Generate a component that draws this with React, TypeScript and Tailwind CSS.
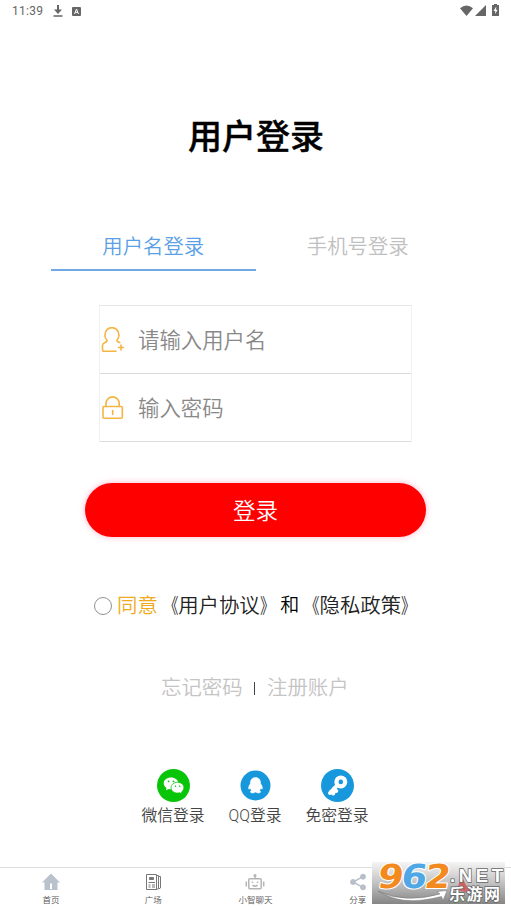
import type { ReactNode } from 'react';

const StatusBar = () => (
  <div className="flex h-[22px] items-center justify-between pl-3 pr-3 text-[#666]">
    <div className="flex items-center">
      <span className="w-[41px] text-[12px] font-normal leading-4 tracking-[0.3px]">11:39</span>
      <svg className="h-3 w-2.5" viewBox="0 0 10 12" fill="currentColor">
        <path d="M4 0h2v4.500h3L5 9 1 4.500h3zM0.500 10.300h9v1.500h-9z" />
      </svg>
      <svg className="ml-[9px] h-[9px] w-[9px]" viewBox="0 0 9 9">
        <rect width="9" height="9" rx="1" fill="currentColor" />
        <path d="M2.500 7 4.500 2l2 5M3.200 5.300h2.600" fill="none" stroke="#fff" strokeWidth="1" />
      </svg>
    </div>
    <div className="mb-0.5 flex items-center">
      <svg className="h-[11px] w-[13px]" viewBox="0 0 13 11" fill="currentColor">
        <path d="M0 3.200Q6.500-2.200 13 3.200L6.500 11z" />
      </svg>
      <svg className="ml-[2px] h-[11px] w-[11px]" viewBox="0 0 11 11" fill="currentColor">
        <path d="M11 0v11H0z" />
      </svg>
      <svg className="ml-[6px] h-3 w-[7px]" viewBox="0 0 7 12">
        <path d="M2 0h3v1h2v11H0V1h2z" fill="currentColor" />
        <path d="M4.300 2.500 1.500 7h1.700v3l2.400-4.300H4z" fill="#fff" />
      </svg>
    </div>
  </div>
);

const UserIcon = () => (
  <svg
    className="h-[26px] w-6"
    viewBox="0 0 24 26"
    fill="none"
    stroke="#f3b544"
    strokeWidth="1.600"
    strokeLinecap="round"
    strokeLinejoin="round"
  >
    <path d="M15 24.300H3Q1.500 24.300 1.500 22.500V18.500Q1.500 16.500 3.500 15.700L5.700 14.500Q6.400 14 5.700 13A7 7 0 0 1 4 7.500a6.900 6.900 0 0 1 13.800 0 7 7 0 0 1-1.700 5.500Q15.500 14 16.500 14.500l2.300 1" />
    <path d="M20 18v5M17.500 20.500h5" />
  </svg>
);

const LockIcon = () => (
  <svg
    className="h-[26px] w-6"
    viewBox="0 0 24 26"
    fill="none"
    stroke="#f3b544"
    strokeWidth="1.600"
    strokeLinecap="round"
    strokeLinejoin="round"
  >
    <rect x="2" y="11.500" width="19.300" height="11.700" rx="1" />
    <path d="M5 11.500V8.500a6.600 6.600 0 0 1 13.200 0v3M11.700 15.500v4" />
  </svg>
);

const Field = ({ icon, label }: { icon: ReactNode; label: string }) => (
  <div className="flex h-[68px] items-center border-b border-[#dcdcdc] pl-px">
    {icon}
    <span className="ml-[13px] pt-[2px] text-[21.400px] leading-8 text-[#888]">{label}</span>
  </div>
);

const DocLink = ({ name }: { name: string }) => (
  <span>
    <span className="inline-block origin-right scale-x-[0.72]">《</span>
    {name}
    <span className="inline-block origin-left scale-x-[0.72]">》</span>
  </span>
);

const WechatIcon = () => (
  <svg className="h-[33px] w-[33px]" viewBox="0 0 33 33">
    <circle cx="16.500" cy="16.500" r="16.500" fill="#09c509" />
    <path d="M14 8.500c-4.200 0-7.300 2.600-7.300 5.800 0 1.900 1.100 3.500 2.800 4.600L8.900 21.300l2.800-1.400c.8.200 1.500.3 2.300.3 4.200 0 7.300-2.600 7.300-5.900S18.200 8.500 14 8.500z" fill="#fff" />
    <path d="M20.500 13.300c-3.700 0-6.400 2.400-6.400 5.400s2.700 5.400 6.400 5.400c.7 0 1.400-.1 2.100-.3l2.400 1.300-.6-2.100c1.500-1 2.500-2.600 2.500-4.300 0-3-2.700-5.400-6.400-5.400z" fill="#fff" stroke="#09c509" strokeWidth="0.800" />
    <g fill="#09c509">
      <circle cx="11.600" cy="12.300" r="0.900" />
      <circle cx="16.500" cy="12.300" r="0.900" />
      <circle cx="18.500" cy="17.200" r="0.800" />
      <circle cx="22.800" cy="17.200" r="0.800" />
    </g>
  </svg>
);

const QQIcon = () => (
  <svg className="h-[33px] w-[33px]" viewBox="0 0 33 33">
    <circle cx="16.500" cy="16.500" r="15" fill="#1798dd" />
    <path d="M16.500 8.500c-3.500 0-5.300 2.600-5.100 6-.8 1.500-2 3.200-1.800 5.200.1.800.9.500 1.600-.6.200 1 .7 1.700 1.300 2.300-1.600.7-1.500 2.600.7 2.600 1.300 0 2.400-.3 3.300-.9.900.6 2 .9 3.300.9 2.200 0 2.300-1.900.7-2.600.6-.6 1.100-1.300 1.300-2.300.7 1.100 1.500 1.400 1.600.6.200-2-1-3.700-1.800-5.200.2-3.400-1.600-6-5.100-6z" fill="#fff" stroke="#fff" strokeWidth="0.500" />
  </svg>
);

const KeyIcon = () => (
  <svg className="h-[33px] w-[33px]" viewBox="0 0 33 33">
    <circle cx="16.500" cy="16.500" r="16.500" fill="#1798dd" />
    <circle cx="19.800" cy="12.900" r="4.400" fill="none" stroke="#fff" strokeWidth="4.200" />
    <path d="m16 16.500-7 7.500M10 22.500l2.300 2M12.800 19.700l2.500 2.300" stroke="#fff" strokeWidth="4" strokeLinecap="round" />
  </svg>
);

const socials = [
  { label: '微信登录', icon: <WechatIcon /> },
  { label: 'QQ登录', icon: <QQIcon /> },
  { label: '免密登录', icon: <KeyIcon /> },
];

const HomeIcon = () => (
  <svg className="h-[18px] w-5" viewBox="0 0 20 18">
    <path d="M10 .5 19 9.500h-2.500V17h-13V9.500H1z" fill="#b9c1cc" />
    <path d="M9 10.500h2V16H9z" fill="#fff" />
  </svg>
);

const NewsIcon = () => (
  <svg className="h-[18px] w-5" viewBox="0 0 20 18" fill="none" stroke="#777">
    <path d="M3.500 1.500h10v15h-10zM13.500 2.500h2v13l-2 1M15.500 3.500h2v11.500l-2 1" />
    <path d="M5.500 12h2M9 12h3M5.500 14h2M9 14h3M5.500 9.500h6.500" />
    <path d="M6.500 4.500h4v2h-4z" fill="#777" />
  </svg>
);

const RobotIcon = () => (
  <svg className="h-[18px] w-5" viewBox="0 0 20 18" fill="none" stroke="#b5b5b5" strokeWidth="1.500">
    <rect x="3.800" y="5.800" width="12.400" height="10" rx="1" />
    <path d="M10 5V2M1.300 8.500v5M18.700 8.500v5M7.500 12.200q2.500 2 5 0" />
    <path d="M6.700 9.300h1.500M11.800 9.300h1.500" />
    <circle cx="10" cy="2.500" r="0.800" fill="#b5b5b5" />
  </svg>
);

const ShareIcon = () => (
  <svg className="h-[18px] w-5" viewBox="0 0 20 18" fill="#b9bfca" stroke="#b9bfca">
    <path d="M15 3.700 5 9l10 5.300" fill="none" strokeWidth="1.500" />
    <circle cx="15" cy="3.700" r="2.500" />
    <circle cx="5" cy="9" r="2.500" />
    <circle cx="15" cy="14.300" r="2.500" />
  </svg>
);

const tabs = [
  { label: '首页', icon: <HomeIcon /> },
  { label: '广场', icon: <NewsIcon /> },
  { label: '小智聊天', icon: <RobotIcon /> },
  { label: '分享', icon: <ShareIcon /> },
];

const SiteBadge = () => (
  <svg className="absolute bottom-[6px] right-[6px] h-[42px] w-[133px] overflow-visible" viewBox="0 0 133 42">
    <defs>
      <linearGradient id="badge" x1="0" y1="0" x2="0" y2="1">
        <stop offset="0" stopColor="#f5f5f5" />
        <stop offset="0.500" stopColor="#c2c2c2" />
        <stop offset="1" stopColor="#858585" />
      </linearGradient>
      <linearGradient id="swoosh" x1="0" y1="0" x2="1" y2="0">
        <stop offset="0" stopColor="#888" />
        <stop offset="0.300" stopColor="#fff" />
        <stop offset="1" stopColor="#fff" />
      </linearGradient>
    </defs>
    <rect width="133" height="42" fill="url(#badge)" />
    <path d="M89 13l6 12h-9zM85 28l9-5 7 9z" fill="#cf6262" />
    <path d="M82 41q10-6 20-2" stroke="#6f9d67" strokeWidth="2" fill="none" />
    <path d="M6 29q27 13 62 3l-3-2.500 10-1-4 10-1.500-4Q29 45 6 29z" fill="url(#swoosh)" stroke="#777" strokeWidth="0.500" />
    <g
      fontFamily="DejaVu Sans, sans-serif"
      fontWeight="700"
      fontSize="33"
      strokeWidth="2"
      stroke="#fff"
      paintOrder="stroke"
      strokeLinejoin="round"
      transform="translate(4.500 26) skewX(-8) scale(1.120 1)"
    >
      <text x="0" y="0" fill="#f28a20">9</text>
      <text x="21" y="0" fill="#50a7e5">6</text>
      <text x="42" y="0" fill="#f28a20">2</text>
    </g>
    <g fill="#fff" stroke="#666" strokeWidth="1.500" paintOrder="stroke" fontWeight="700">
      <text x="78" y="19.500" fontSize="18.500" fontFamily="Liberation Sans, sans-serif" textLength="53">.NET</text>
      <text x="77" y="38" fontSize="16" fontFamily="Noto Sans CJK SC, sans-serif" textLength="51">乐游网</text>
    </g>
  </svg>
);

export default function App() {
  return (
    <div className="relative flex h-[910px] w-[511px] flex-col overflow-hidden bg-white font-['Roboto','Noto_Sans_CJK_SC',sans-serif] font-[350]">
      <StatusBar />

      <h1 className="mt-[90px] pl-px text-center text-[34px] font-medium leading-[50px] text-black [-webkit-text-stroke:0.400px_black]">
        用户登录
      </h1>

      <div className="mx-[51px] mt-[60px] flex h-[49px] text-center text-[20.400px] leading-[51px]">
        <div className="flex-1 border-b-2 border-[#70a9e5] text-[#5b9fe6]">用户名登录</div>
        <div className="flex-1 text-[#c0c0c0]">手机号登录</div>
      </div>

      <div className="ml-[99px] mt-[34px] w-[313px] border-x border-t border-x-[#f0f0f0] border-t-[#e6e6e6]">
        <Field icon={<UserIcon />} label="请输入用户名" />
        <Field icon={<LockIcon />} label="输入密码" />
      </div>

      <button className="ml-[85px] mt-[41px] h-[54px] w-[341px] rounded-full bg-[#ff0000] text-[22.500px] leading-[56px] text-white shadow-[0_0_6px_rgba(255,0,80,0.3)]">
        登录
      </button>

      <div className="ml-[94px] mt-[54px] flex h-[30px] items-center whitespace-nowrap text-[20.400px] leading-[30px] text-[#222]">
        <span className="mb-px mr-[5px] h-[18px] w-[18px] rounded-full border border-[#929292]" />
        <span className="text-[#efaa20]">同意</span>
        <DocLink name="用户协议" />
        <span className="text-[19px] text-black">和</span>
        <DocLink name="隐私政策" />
      </div>

      <div className="ml-[161px] mt-[52px] flex h-[30px] items-center text-[20.400px] leading-[30px] text-[#c4c4c4]">
        <span>忘记密码</span>
        <span className="ml-[11px] mr-3 h-[13px] w-[1.500px] bg-[#444]" />
        <span>注册账户</span>
      </div>

      <div className="ml-[132px] mt-[66px] flex">
        {socials.map((s) => (
          <div key={s.label} className="flex w-[82px] flex-col items-center">
            {s.icon}
            <span className="text-[15.800px] leading-[28px] text-[#444]">{s.label}</span>
          </div>
        ))}
      </div>

      <div className="mt-auto flex h-[43px] border-t border-[#dedede]">
        {tabs.map((t) => (
          <div key={t.label} className="flex w-1/5 flex-col items-center pt-[5px]">
            {t.icon}
            <span className="mt-[3px] text-[8.500px] leading-[12px] text-[#555]">{t.label}</span>
          </div>
        ))}
      </div>
      <SiteBadge />
    </div>
  );
}
